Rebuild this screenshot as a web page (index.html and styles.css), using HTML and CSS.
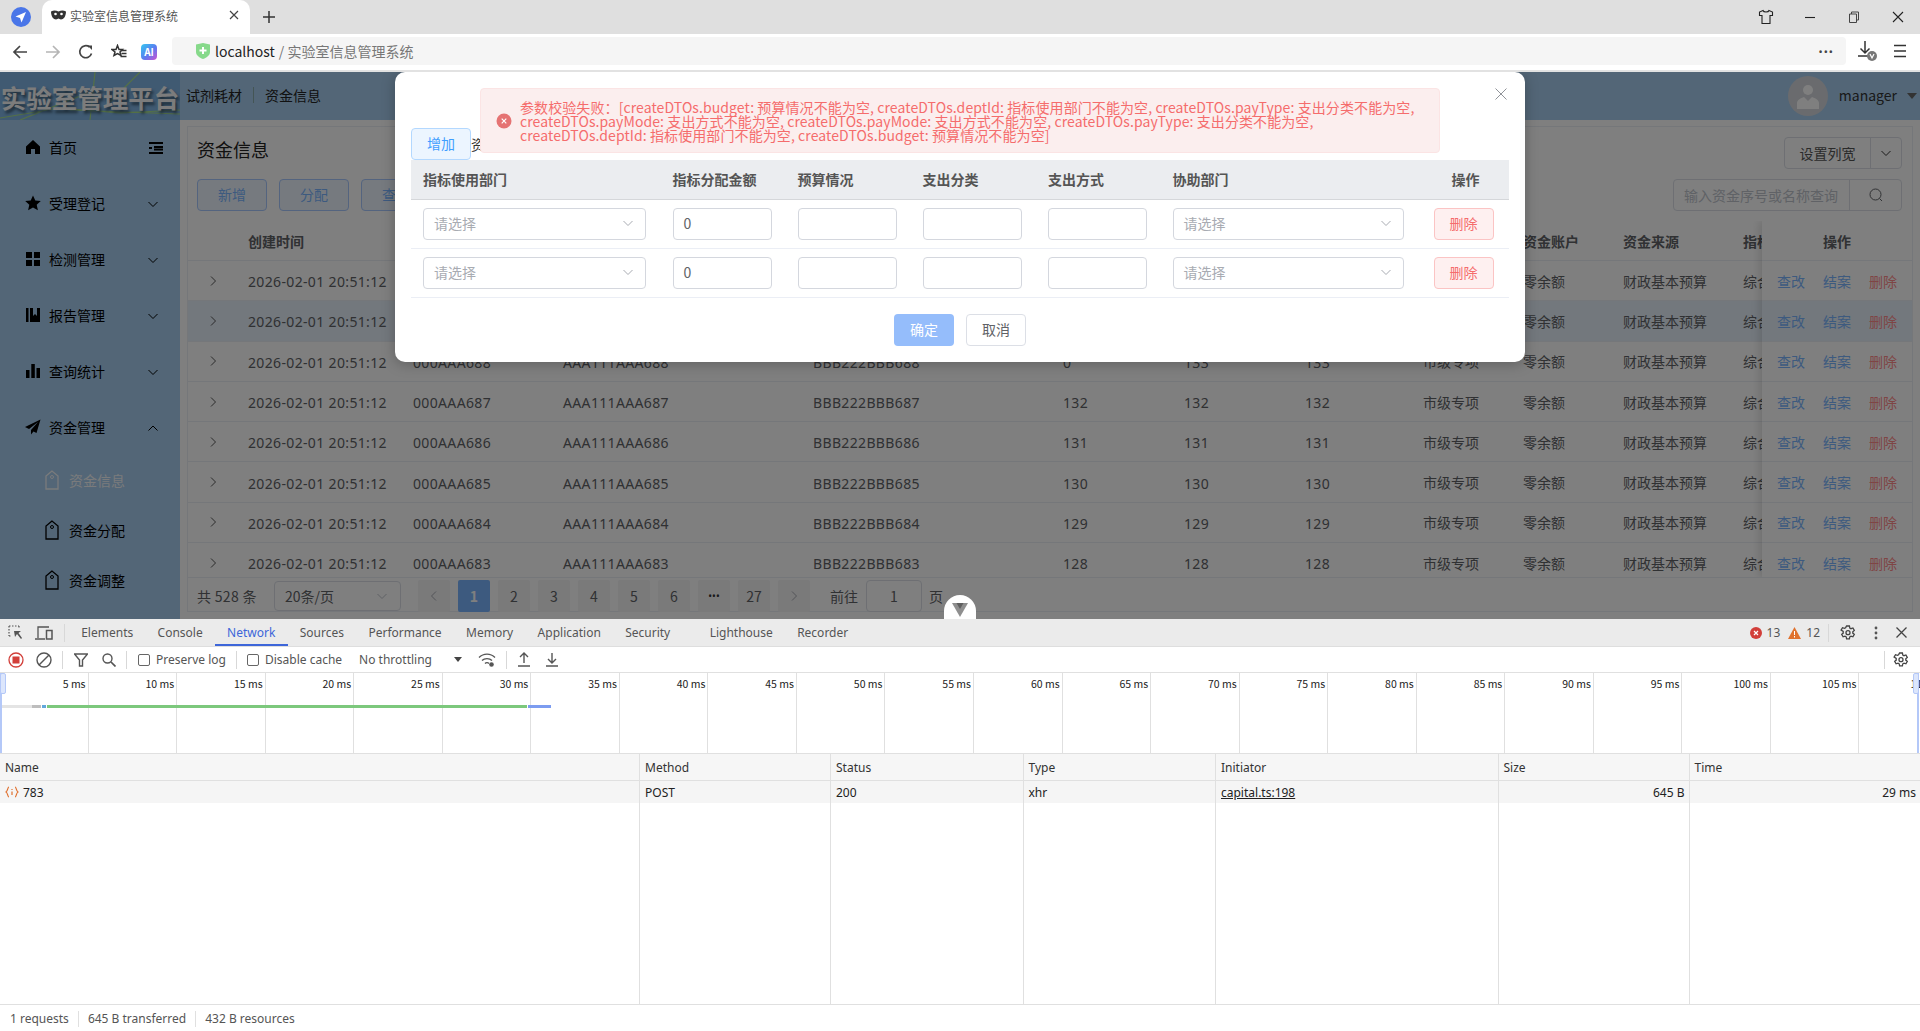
FILE: index.html
```html
<!DOCTYPE html>
<html lang="zh-CN">
<head>
  <meta charset="UTF-8">
  <title>实验室信息管理系统</title>
  <link rel="stylesheet" href="styles.css">
</head>
<body>
  <svg class="defs" width="0" height="0">
    <symbol id="down" viewBox="0 0 12 12"><path d="M1.5 4 6 8.5 10.5 4" fill="none" stroke="currentColor" stroke-width="1"/></symbol>
    <symbol id="up" viewBox="0 0 12 12"><path d="M1.5 8.5 6 4l4.5 4.5" fill="none" stroke="currentColor" stroke-width="1"/></symbol>
    <symbol id="right" viewBox="0 0 12 12"><path d="M4 1.5 8.5 6 4 10.5" fill="none" stroke="currentColor" stroke-width="1"/></symbol>
    <symbol id="left" viewBox="0 0 12 12"><path d="M8 1.5 3.5 6 8 10.5" fill="none" stroke="currentColor" stroke-width="1"/></symbol>
    <symbol id="tag" viewBox="0 0 14 20"><path d="M7 1 1 6v13h12V6z" fill="none" stroke="currentColor" stroke-width="1.3"/><circle cx="7" cy="7" r="1.5" fill="none" stroke="currentColor"/></symbol>
    <symbol id="gear" viewBox="0 0 16 16"><path d="M6.6 1h2.8l.4 2 1.2.7 1.9-.7 1.4 2.4-1.5 1.3v1.4l1.5 1.3-1.4 2.4-1.9-.7-1.2.7-.4 2H6.6l-.4-2-1.2-.7-1.9.7-1.4-2.4 1.5-1.3V6.400L1.100 5.100l1.400-2.400 1.900.7 1.200-.7z" fill="none" stroke="currentColor" stroke-width="1.300"/><circle cx="8" cy="7.700" r="2" fill="none" stroke="currentColor" stroke-width="1.300"/></symbol>
  </svg>

  <div class="tabstrip">
    <span class="pinned">
      <svg width="20" height="20" viewBox="0 0 20 20"><circle cx="10" cy="10" r="10" fill="#4a76e8"/><path d="M15 5 4.500 9.500l4.500 1.500 1.500 4.500z" fill="#fff"/></svg>
    </span>
    <div class="tab">
      <svg class="tab-icon" width="15" height="10" viewBox="0 0 15 10"><path d="M0 1.500C3 0 5 .5 7.500 1.500 10 .5 12 0 15 1.500c0 5-2.500 8-5 8-1.200 0-1.800-1-2.500-1s-1.300 1-2.500 1c-2.500 0-5-3-5-8z" fill="#333"/><circle cx="4.500" cy="4" r="1.300" fill="#fff"/><circle cx="10.500" cy="4" r="1.300" fill="#fff"/></svg>
      <span class="tab-title">实验室信息管理系统</span>
      <svg class="tab-close" width="10" height="10" viewBox="0 0 10 10"><path d="M1 1l8 8M9 1 1 9" stroke="#444" stroke-width="1.200"/></svg>
    </div>
    <svg class="newtab" width="14" height="14" viewBox="0 0 14 14"><path d="M7 1v12M1 7h12" stroke="#333" stroke-width="1.500"/></svg>
    <div class="win-btns">
      <svg class="win-skin" width="16" height="16" viewBox="0 0 16 16"><path d="M5 1.500 1.500 3v3.500H4v8h8v-8h2.500V3L11 1.500C10.500 3.500 5.500 3.500 5 1.500z" fill="none" stroke="#222" stroke-width="1.100"/></svg>
      <svg width="12" height="12" viewBox="0 0 12 12"><path d="M1 6.500h10" stroke="#222" stroke-width="1.100"/></svg>
      <svg width="12" height="12" viewBox="0 0 12 12"><path d="M3.500 3V1h7v8H8.500M1.500 3h7v8.500h-7z" fill="none" stroke="#444"/></svg>
      <svg width="12" height="12" viewBox="0 0 12 12"><path d="M1 1l10 10M11 1 1 11" stroke="#222" stroke-width="1.100"/></svg>
    </div>
  </div>

  <div class="toolbar">
    <div class="nav-btns">
      <svg width="16" height="16" viewBox="0 0 16 16"><path d="M15 8H2M8 2 2 8l6 6" fill="none" stroke="#444" stroke-width="1.700"/></svg>
      <svg width="16" height="16" viewBox="0 0 16 16"><path d="M1 8h13M8 2l6 6-6 6" fill="none" stroke="#b5b5b5" stroke-width="1.700"/></svg>
      <svg width="16" height="16" viewBox="0 0 16 16"><path d="M13.500 9.500A6 6 0 1 1 11.500 3" fill="none" stroke="#444" stroke-width="1.700"/><path d="M9.500 1.500h4.500V6z" fill="#444"/></svg>
      <svg width="16" height="16" viewBox="0 0 16 16"><path d="M6.500 1.500 8 5.500h-.5 4L9 8l1 3.500-3.500-2-3.500 2 1-3.500L1 5.500h4z" fill="none" stroke="#333" stroke-width="1.500"/><path d="M10.500 6.500H15.500M10.500 9.500H15.500M9.500 12.500H15.500" stroke="#333" stroke-width="1.500"/></svg>
      <span class="ai-badge">AI</span>
    </div>
    <div class="addressbar">
      <svg width="14" height="16" viewBox="0 0 14 16"><path d="M0 1.500 7 0l7 1.500V9c0 3-3 5.500-7 7-4-1.500-7-4-7-7z" fill="#86d98a"/><path d="M7 4v7M3.500 7.500h7" stroke="#fff" stroke-width="2"/></svg>
      <span class="host">localhost</span>
      <span class="path">/ 实验室信息管理系统</span>
      <span class="addr-more">•••</span>
    </div>
    <div class="tool-right">
      <svg width="22" height="22" viewBox="0 0 22 22"><path d="M8 1v12M3.500 8.500 8 13l4.500-4.500M1 16h12" fill="none" stroke="#333" stroke-width="1.500"/><circle cx="15" cy="16" r="5" fill="#777"/><path d="M13 14l2 4 2-4" fill="none" stroke="#fff" stroke-width="1.200"/></svg>
      <svg width="12" height="14" viewBox="0 0 12 14"><path d="M0 1.500h12M0 7h12M0 12.500h12" stroke="#333" stroke-width="1.700"/></svg>
    </div>
  </div>

  <div class="app">
    <header class="app-head">
      <div class="logo">
        <svg class="logo-grass" width="180" height="48" viewBox="0 0 180 48"><path d="M0 46 60 36 120 41 180 38M20 48 90 20M95 0 90 48M140 0 110 30M70 38 180 42" fill="none" stroke="#a8e08c" stroke-width="1.200"/></svg>
        <span class="logo-text">实验室管理平台</span>
      </div>
      <div class="crumbs"><span>试剂耗材</span><i></i><span>资金信息</span></div>
      <div class="user">
        <span class="avatar">
          <svg width="24" height="26" viewBox="0 0 24 26"><circle cx="12" cy="7" r="5" fill="#fff"/><path d="M1 26v-6c0-3 4-5 7-6l4 4 4-4c3 1 7 3 7 6v6z" fill="#fff"/></svg>
        </span>
        <span class="user-name">manager</span>
        <span class="caret"></span>
      </div>
    </header>

    <div class="app-body">
      <nav class="side">
        <div class="side-item">
          <svg class="side-icon" width="16" height="16" viewBox="0 0 16 16"><path d="M8 1 1 7.500V15h5v-5h4v5h5V7.500z"/></svg>
          <span>首页</span>
          <svg class="side-fold" width="14" height="14" viewBox="0 0 14 14"><path d="M0 2h14M5 6h9M0 7h3M5 8.500h9M0 12h14" stroke="#000" stroke-width="2"/></svg>
        </div>
        <div class="side-item">
          <svg class="side-icon" width="16" height="16" viewBox="0 0 16 16"><path d="M8 .5l2.300 5 5.500.6-4.100 3.700 1.200 5.400L8 12.400l-4.900 2.800 1.200-5.400L.2 6.100l5.500-.6z"/></svg>
          <span>受理登记</span><svg class="side-arrow"><use href="#down"/></svg>
        </div>
        <div class="side-item">
          <svg class="side-icon" width="16" height="16" viewBox="0 0 16 16"><path d="M1 1h6v6H1zM9 1h6v6H9zM1 9h6v6H1zM9 9h6v6H9z"/></svg>
          <span>检测管理</span><svg class="side-arrow"><use href="#down"/></svg>
        </div>
        <div class="side-item">
          <svg class="side-icon" width="16" height="16" viewBox="0 0 16 16"><path d="M1 1h2.500v14H1zM5 1h3v8l2-2 2 2V1h3v14H5z"/></svg>
          <span>报告管理</span><svg class="side-arrow"><use href="#down"/></svg>
        </div>
        <div class="side-item">
          <svg class="side-icon" width="16" height="16" viewBox="0 0 16 16"><path d="M1 7h3.500v8H1zM6.300 1h3.500v14H6.300zM11.500 5H15v10h-3.500z"/></svg>
          <span>查询统计</span><svg class="side-arrow"><use href="#down"/></svg>
        </div>
        <div class="side-item">
          <svg class="side-icon" width="16" height="16" viewBox="0 0 16 16"><path d="M15.500.5 0 8l4 2L13 3 6 11v4.500l2.500-3 3 1.500z"/></svg>
          <span>资金管理</span><svg class="side-arrow"><use href="#up"/></svg>
        </div>
        <div class="side-sub active"><svg class="sub-icon"><use href="#tag"/></svg><span>资金信息</span></div>
        <div class="side-sub"><svg class="sub-icon"><use href="#tag"/></svg><span>资金分配</span></div>
        <div class="side-sub"><svg class="sub-icon"><use href="#tag"/></svg><span>资金调整</span></div>
      </nav>

      <main class="main">
        <section class="panel">
          <div class="panel-title">
            <h1>资金信息</h1>
            <div class="btn-group">
              <span class="group-text">设置列宽</span>
              <span class="group-arrow"><svg width="12" height="12"><use href="#down"/></svg></span>
            </div>
          </div>
          <div class="panel-tools">
            <span class="btn-plain">新增</span>
            <span class="btn-plain">分配</span>
            <span class="btn-plain">查询</span>
            <div class="search">
              <span class="search-text">输入资金序号或名称查询</span>
              <span class="search-btn">
                <svg width="14" height="14" viewBox="0 0 14 14"><circle cx="6.500" cy="6.500" r="5.500" fill="none" stroke="#606266"/><path d="M10.500 10.500 13 13" stroke="#606266"/></svg>
              </span>
            </div>
          </div>

          <div class="table">
            <div class="table-main">
              <div class="tr th">
                <span></span><span>创建时间</span><span>资金序号</span><span>资金名称</span><span>资金编号</span><span>总金额</span><span>可用金额</span><span>已用</span><span>资金类型</span><span>资金账户</span><span>资金来源</span><span>指标来源</span>
              </div>
              <div class="tr">
                <svg class="expand"><use href="#right"/></svg><span>2026-02-01 20:51:12</span><span>000AAA690</span><span>AAA111AAA690</span><span>BBB222BBB690</span><span>135</span><span>135</span><span>135</span><span>市级专项</span><span>零余额</span><span>财政基本预算</span><span>综合预算</span>
              </div>
              <div class="tr hover">
                <svg class="expand"><use href="#right"/></svg><span>2026-02-01 20:51:12</span><span>000AAA689</span><span>AAA111AAA689</span><span>BBB222BBB689</span><span>134</span><span>134</span><span>134</span><span>市级专项</span><span>零余额</span><span>财政基本预算</span><span>综合预算</span>
              </div>
              <div class="tr">
                <svg class="expand"><use href="#right"/></svg><span>2026-02-01 20:51:12</span><span>000AAA688</span><span>AAA111AAA688</span><span>BBB222BBB688</span><span>0</span><span>133</span><span>133</span><span>市级专项</span><span>零余额</span><span>财政基本预算</span><span>综合预算</span>
              </div>
              <div class="tr">
                <svg class="expand"><use href="#right"/></svg><span>2026-02-01 20:51:12</span><span>000AAA687</span><span>AAA111AAA687</span><span>BBB222BBB687</span><span>132</span><span>132</span><span>132</span><span>市级专项</span><span>零余额</span><span>财政基本预算</span><span>综合预算</span>
              </div>
              <div class="tr">
                <svg class="expand"><use href="#right"/></svg><span>2026-02-01 20:51:12</span><span>000AAA686</span><span>AAA111AAA686</span><span>BBB222BBB686</span><span>131</span><span>131</span><span>131</span><span>市级专项</span><span>零余额</span><span>财政基本预算</span><span>综合预算</span>
              </div>
              <div class="tr">
                <svg class="expand"><use href="#right"/></svg><span>2026-02-01 20:51:12</span><span>000AAA685</span><span>AAA111AAA685</span><span>BBB222BBB685</span><span>130</span><span>130</span><span>130</span><span>市级专项</span><span>零余额</span><span>财政基本预算</span><span>综合预算</span>
              </div>
              <div class="tr">
                <svg class="expand"><use href="#right"/></svg><span>2026-02-01 20:51:12</span><span>000AAA684</span><span>AAA111AAA684</span><span>BBB222BBB684</span><span>129</span><span>129</span><span>129</span><span>市级专项</span><span>零余额</span><span>财政基本预算</span><span>综合预算</span>
              </div>
              <div class="tr">
                <svg class="expand"><use href="#right"/></svg><span>2026-02-01 20:51:12</span><span>000AAA683</span><span>AAA111AAA683</span><span>BBB222BBB683</span><span>128</span><span>128</span><span>128</span><span>市级专项</span><span>零余额</span><span>财政基本预算</span><span>综合预算</span>
              </div>
            </div>
            <div class="table-fixed">
              <div class="fx th"><span>操作</span></div>
              <div class="fx"><a class="blue">查改</a><a class="blue">结案</a><a class="red">删除</a></div>
              <div class="fx hover"><a class="blue">查改</a><a class="blue">结案</a><a class="red">删除</a></div>
              <div class="fx"><a class="blue">查改</a><a class="blue">结案</a><a class="red">删除</a></div>
              <div class="fx"><a class="blue">查改</a><a class="blue">结案</a><a class="red">删除</a></div>
              <div class="fx"><a class="blue">查改</a><a class="blue">结案</a><a class="red">删除</a></div>
              <div class="fx"><a class="blue">查改</a><a class="blue">结案</a><a class="red">删除</a></div>
              <div class="fx"><a class="blue">查改</a><a class="blue">结案</a><a class="red">删除</a></div>
              <div class="fx"><a class="blue">查改</a><a class="blue">结案</a><a class="red">删除</a></div>
            </div>
          </div>

          <div class="pager">
            <span class="pager-total">共 528 条</span>
            <span class="pager-size">20条/页<svg width="12" height="12"><use href="#down"/></svg></span>
            <div class="pager-nums">
              <span class="pg muted"><svg width="12" height="12"><use href="#left"/></svg></span>
              <span class="pg on">1</span><span class="pg">2</span><span class="pg">3</span><span class="pg">4</span><span class="pg">5</span><span class="pg">6</span><span class="pg dots">•••</span><span class="pg">27</span>
              <span class="pg muted"><svg width="12" height="12"><use href="#right"/></svg></span>
            </div>
            <span class="pager-go">前往</span>
            <span class="pager-input">1</span>
            <span class="pager-unit">页</span>
          </div>
        </section>
      </main>
    </div>

    <div class="mask"></div>

    <div class="dialog">
      <div class="dialog-add"><span class="btn-add">增加</span><span class="add-note">资金序号</span></div>
      <div class="alert">
        <svg width="16" height="16" viewBox="0 0 16 16"><circle cx="8" cy="8" r="7.500" fill="#e57373"/><path d="M5.700 5.700l4.600 4.600M10.300 5.700l-4.600 4.600" stroke="#fff" stroke-width="1.200"/></svg>
        <p>参数校验失败：[createDTOs.budget: 预算情况不能为空, createDTOs.deptId: 指标使用部门不能为空, createDTOs.payType: 支出分类不能为空,<br>createDTOs.payMode: 支出方式不能为空, createDTOs.payMode: 支出方式不能为空, createDTOs.payType: 支出分类不能为空,<br>createDTOs.deptId: 指标使用部门不能为空, createDTOs.budget: 预算情况不能为空]</p>
      </div>
      <svg class="dialog-close" width="12" height="12" viewBox="0 0 12 12"><path d="M.5.500l11 11M11.500.500l-11 11" stroke="#909399"/></svg>
      <div class="dt dt-head">
        <span>指标使用部门</span><span>指标分配金额</span><span>预算情况</span><span>支出分类</span><span>支出方式</span><span>协助部门</span><span class="dt-op">操作</span>
      </div>
      <div class="dt dt-row">
        <span class="sel sel-a">请选择<svg width="12" height="12"><use href="#down"/></svg></span>
        <span class="inp">0</span><span class="inp"></span><span class="inp"></span><span class="inp"></span>
        <span class="sel sel-b">请选择<svg width="12" height="12"><use href="#down"/></svg></span>
        <span class="btn-del">删除</span>
      </div>
      <div class="dt dt-row">
        <span class="sel sel-a">请选择<svg width="12" height="12"><use href="#down"/></svg></span>
        <span class="inp">0</span><span class="inp"></span><span class="inp"></span><span class="inp"></span>
        <span class="sel sel-b">请选择<svg width="12" height="12"><use href="#down"/></svg></span>
        <span class="btn-del">删除</span>
      </div>
      <div class="dialog-foot"><span class="btn-ok">确定</span><span class="btn-cancel">取消</span></div>
    </div>

    <div class="vue-tab">
      <svg width="16" height="14" viewBox="0 0 16 14"><path d="M0 0h16L8 14z" fill="#8f8f8f"/><path d="M4.500 0h7L8 6z" fill="#5f5f5f"/></svg>
    </div>
  </div>

  <div class="devtools">
    <div class="dt-tabs">
      <svg class="dt-ico" width="16" height="16" viewBox="0 0 16 16"><path d="M1 1h10M1 1v10M1 11h3M11 1v3" fill="none" stroke="#555" stroke-width="1.200" stroke-dasharray="1.500 1.500"/><path d="M6 6h7l-2.500 2 3.500 5-1 1-4-5L7 12z" fill="#555"/></svg>
      <svg class="dt-ico" width="18" height="16" viewBox="0 0 18 16"><path d="M3 13V2h11M0 14h10" fill="none" stroke="#555" stroke-width="1.300"/><rect x="11.500" y="5.500" width="5.500" height="8.500" fill="none" stroke="#555" stroke-width="1.500"/></svg>
      <i class="dt-sep"></i>
      <span class="dt-tab">Elements</span>
      <span class="dt-tab">Console</span>
      <span class="dt-tab on">Network</span>
      <span class="dt-tab">Sources</span>
      <span class="dt-tab">Performance</span>
      <span class="dt-tab">Memory</span>
      <span class="dt-tab">Application</span>
      <span class="dt-tab">Security</span>
      <span class="dt-tab wide">Lighthouse</span>
      <span class="dt-tab">Recorder</span>
      <div class="dt-right">
        <svg width="12" height="12" viewBox="0 0 12 12"><circle cx="6" cy="6" r="6" fill="#d23f3a"/><path d="M4 4l4 4M8 4 4 8" stroke="#fff" stroke-width="1.200"/></svg>
        <span class="count">13</span>
        <svg class="warn" width="13" height="12" viewBox="0 0 13 12"><path d="M6.500 0 13 12H0z" fill="#e0722e"/><path d="M6.500 4v4M6.500 9v1.500" stroke="#fff"/></svg>
        <span class="count">12</span>
        <i class="dt-sep"></i>
        <svg class="dt-gear" width="16" height="16"><use href="#gear"/></svg>
        <svg class="dt-dots" width="4" height="14" viewBox="0 0 4 14"><circle cx="2" cy="2" r="1.400" fill="#555"/><circle cx="2" cy="7" r="1.400" fill="#555"/><circle cx="2" cy="12" r="1.400" fill="#555"/></svg>
        <svg class="dt-x" width="11" height="11" viewBox="0 0 11 11"><path d="M.5.500l10 10M10.500.500l-10 10" stroke="#444" stroke-width="1.300"/></svg>
      </div>
    </div>
    <div class="dt-tools">
      <svg width="16" height="16" viewBox="0 0 16 16"><circle cx="8" cy="8" r="7" fill="none" stroke="#d23f3a" stroke-width="1.300"/><rect x="4.500" y="4.500" width="7" height="7" fill="#d23f3a"/></svg>
      <svg class="t-clear" width="16" height="16" viewBox="0 0 16 16"><circle cx="8" cy="8" r="7" fill="none" stroke="#555" stroke-width="1.400"/><path d="M3 13 13 3" stroke="#555" stroke-width="1.400"/></svg>
      <i class="dt-sep"></i>
      <svg class="t-filter" width="14" height="14" viewBox="0 0 14 14"><path d="M.5 1h13L8.500 7v6h-3V7z" fill="none" stroke="#555" stroke-width="1.400"/></svg>
      <svg class="t-search" width="14" height="14" viewBox="0 0 14 14"><circle cx="5.500" cy="5.500" r="4.500" fill="none" stroke="#555" stroke-width="1.400"/><path d="M9 9l4.500 4.500" stroke="#555" stroke-width="1.700"/></svg>
      <i class="dt-sep"></i>
      <label class="chk"><i></i>Preserve log</label>
      <i class="dt-sep"></i>
      <label class="chk"><i></i>Disable cache</label>
      <span class="throttle">No throttling</span>
      <span class="tri"></span>
      <svg class="t-wifi" width="18" height="16" viewBox="0 0 18 16"><path d="M1 5.500C5.500 1 12.500 1 17 5.500M4 8.500C6.500 6 11.500 6 14 8.500M7 11.500c1-1 3-1 4 0" fill="none" stroke="#555" stroke-width="1.300"/><circle cx="13.500" cy="12.500" r="2.300" fill="#555"/></svg>
      <i class="dt-sep"></i>
      <svg class="t-up" width="14" height="15" viewBox="0 0 14 15"><path d="M7 11V1M3 5l4-4 4 4M1 14h12" fill="none" stroke="#555" stroke-width="1.400"/></svg>
      <svg class="t-down" width="14" height="15" viewBox="0 0 14 15"><path d="M7 1v10M3 7l4 4 4-4M1 14h12" fill="none" stroke="#555" stroke-width="1.400"/></svg>
      <div class="t-right"><i class="dt-sep"></i><svg class="dt-gear" width="16" height="16"><use href="#gear"/></svg></div>
    </div>
    <div class="overview">
      <div class="ticks">
        <span>5 ms</span><span>10 ms</span><span>15 ms</span><span>20 ms</span><span>25 ms</span><span>30 ms</span><span>35 ms</span><span>40 ms</span><span>45 ms</span><span>50 ms</span><span>55 ms</span><span>60 ms</span><span>65 ms</span><span>70 ms</span><span>75 ms</span><span>80 ms</span><span>85 ms</span><span>90 ms</span><span>95 ms</span><span>100 ms</span><span>105 ms</span><span>110 ms</span>
      </div>
      <div class="wf">
        <i class="wf-a"></i><i class="wf-b"></i><i class="wf-c"></i><i class="wf-d"></i><i class="wf-e"></i>
      </div>
      <span class="handle handle-l"></span>
      <span class="handle handle-r"></span>
    </div>
    <div class="net">
      <div class="nh">Name</div><div class="nh">Method</div><div class="nh">Status</div><div class="nh">Type</div><div class="nh">Initiator</div><div class="nh">Size</div><div class="nh">Time</div>
      <div class="nr"><svg class="xhr-ico" width="14" height="12" viewBox="0 0 14 12"><path d="M4 1C2.500 1 3 5 1 6c2 1 1.500 5 3 5M10 1c1.500 0 1 4 3 5-2 1-1.500 5-3 5" fill="none" stroke="#e0702e" stroke-width="1.100"/><path d="M7 3v1M7 5.500V9" stroke="#e0702e" stroke-width="1.200"/></svg>783</div>
      <div class="nr">POST</div><div class="nr">200</div><div class="nr">xhr</div><div class="nr"><u>capital.ts:198</u></div><div class="nr num">645 B</div><div class="nr num">29 ms</div>
      <div class="nf"></div><div class="nf"></div><div class="nf"></div><div class="nf"></div><div class="nf"></div><div class="nf"></div><div class="nf"></div>
    </div>
    <div class="dt-status">
      <span>1 requests</span><span>645 B transferred</span><span>432 B resources</span>
    </div>
  </div>
</body>
</html>
```

FILE: styles.css
```css
* { margin: 0; padding: 0; box-sizing: border-box; }
html, body { width: 1920px; height: 1031px; overflow: hidden; background: #fff; }
body { font-family: "Noto Sans CJK SC", "Noto Sans", sans-serif; font-size: 14px; color: #333; }
i { font-style: normal; display: block; }
.defs { position: absolute; }

/* browser chrome */
.tabstrip { height: 34px; background: #dfdfdf; display: flex; align-items: center; }
.pinned { width: 42px; display: flex; justify-content: center; }
.tab { width: 208px; height: 34px; background: #fff; border-radius: 10px 10px 0 0; display: flex; align-items: center; padding: 0 0 4px 9px; position: relative; }
.tab-icon { margin-right: 4px; }
.tab-title { font-size: 12px; color: #555; flex: 1; }
.tab-close { margin-right: 11px; }
.newtab { margin-left: 12px; }
.win-btns { margin-left: auto; display: flex; align-items: center; gap: 30px; padding-right: 16px; }
.win-btns svg:nth-child(n+2) { margin-left: 2px; }
.win-skin { margin-right: -2px; }

.toolbar { height: 38px; background: #fff; border-bottom: 2px solid #e2e2e2; display: flex; align-items: center; }
.nav-btns { width: 172px; display: flex; align-items: center; gap: 17px; padding-left: 12px; }
.ai-badge { width: 16px; height: 16px; margin-left: -3px; border-radius: 4px; background: linear-gradient(135deg, #35c8f0, #5a7bf0 55%, #d050d0); color: #fff; font-size: 10px; font-weight: 700; line-height: 16px; text-align: center; }
.addressbar { width: 1674px; height: 28px; margin-top: -2px; background: #f5f5f5; border-radius: 4px; display: flex; align-items: center; padding-left: 24px; }
.host { font-size: 14px; color: #222; margin-left: 5px; }
.path { font-size: 14px; color: #777; margin-left: 4px; }
.addr-more { margin-left: auto; margin-right: 12px; font-family: "Noto Sans", sans-serif; font-size: 11px; letter-spacing: 1px; color: #444; }
.tool-right { flex: 1; display: flex; align-items: center; gap: 15px; padding-left: 11px; margin-top: -2px; }

/* app */
.app { height: 547px; position: relative; overflow: hidden; background: #fff; }
.app-head { height: 48px; background: #a6ccee; display: flex; align-items: center; }
.logo { width: 180px; height: 48px; background: #80b4e4; position: relative; overflow: hidden; display: flex; align-items: center; justify-content: center; }
.logo-grass { position: absolute; left: 0; top: 0; }
.logo-text { position: relative; font-size: 25.5px; font-weight: 700; color: #f8f8f8; text-shadow: 2px 3px 3px #3c5a70; white-space: nowrap; }
.crumbs { display: flex; align-items: center; padding: 0 0 3px 6px; color: #222; }
.crumbs i { width: 1px; height: 16px; background: #8aa; margin: 0 11px; }
.user { margin-left: auto; display: flex; align-items: center; }
.avatar { width: 40px; height: 40px; border-radius: 50%; background: #d4d7dc; display: flex; align-items: flex-end; justify-content: center; padding-bottom: 7px; }
.user-name { font-size: 14px; color: #333; margin: 0 0 2px 11px; }
.caret { width: 0; height: 0; border: 5px solid transparent; border-top: 6px solid #666; border-bottom: 0; margin: 0 3px 0 10px; }

.app-body { height: 499px; display: flex; }
.side { width: 180px; background: #a6ccee; color: #000; }
.side-item { height: 56px; display: flex; align-items: center; padding: 0 0 2px 25px; position: relative; }
.side-icon { margin-right: 8px; fill: #000; }
.side-fold { position: absolute; left: 149px; top: 21px; }
.side-arrow { position: absolute; left: 147px; top: 22px; width: 12px; height: 12px; }
.side-sub { height: 50px; display: flex; align-items: center; padding: 0 0 2px 45px; }
.sub-icon { width: 14px; height: 20px; margin-right: 10px; }
.side-sub.active { color: #f4f6f8; }

.main { flex: 1; background: #fff; padding: 6px 7px 7px 7px; min-width: 0; }
.panel { height: 486px; border: 1px solid #ebeef5; background: #fff; display: flex; flex-direction: column; }
.panel-title { display: flex; align-items: center; justify-content: space-between; padding: 10px 10px 11px 9px; height: 52px; }
.panel-title h1 { font-size: 18px; font-weight: 400; color: #222; padding-bottom: 8px; }
.btn-group { width: 118px; height: 32px; border: 1px solid #dcdfe6; border-radius: 4px; display: flex; align-items: center; }
.group-text { width: 86px; text-align: center; color: #555; border-right: 1px solid #dcdfe6; line-height: 30px; }
.group-arrow { flex: 1; display: flex; justify-content: center; color: #333; }
.panel-tools { display: flex; gap: 12px; padding: 0 10px 0 9px; height: 32px; align-items: stretch; position: relative; }
.btn-plain { width: 70px; padding-bottom: 2px; border: 1px solid #a8c8ff; border-radius: 4px; background: #ecf5ff; color: #7ab5ff; display: flex; align-items: center; justify-content: center; }
.search { margin-left: auto; width: 229px; border: 1px solid #dcdfe6; border-radius: 4px; display: flex; }
.search-text { width: 176px; color: #c0c4cc; padding-left: 10px; line-height: 30px; border-right: 1px solid #dcdfe6; white-space: nowrap; }
.search-btn { flex: 1; display: flex; align-items: center; justify-content: center; }

.table { height: 357px; margin-top: 10px; display: flex; overflow: hidden; }
.table-main { width: 1574px; flex: none; overflow: hidden; }
.tr { display: grid; grid-template-columns: 60px 165px 150px 250px 250px 121px 121px 118px 100px 100px 120px 19px; height: 40.3px; align-items: center; border-bottom: 1px solid #ebeef5; color: #606266; white-space: nowrap; overflow: hidden; }
.tr span:nth-child(n+2):nth-child(-n+8) { padding-top: 2px; font-family: "Noto Sans", "Noto Sans CJK SC", sans-serif; letter-spacing: .35px; }
.tr.th { height: 40px; font-weight: 700; color: #606266; }
.tr.th span:nth-child(n+2) { padding-top: 0; font-family: "Noto Sans CJK SC", sans-serif; letter-spacing: 0; }
.tr.hover, .fx.hover { background: #e6f0fa; }
.expand { width: 12px; height: 12px; margin-left: 19px; color: #555; }
.table-fixed { flex: 1; position: relative; box-shadow: -3px 0 8px rgba(0, 0, 0, .12); background: #fff; }
.fx { height: 40.3px; display: flex; align-items: center; justify-content: center; gap: 18px; border-bottom: 1px solid #ebeef5; }
.fx.th { height: 40px; font-weight: 700; color: #606266; }
.blue { color: #7ab5ff; }
.red { color: #ff8a8a; }

.pager { height: 34px; padding: 2px 0 0 9px; border-top: 1px solid #ebeef5; display: flex; align-items: center; color: #606266; }
.pager-total { width: 77px; letter-spacing: .3px; }
.pager-size { width: 127px; height: 30px; border: 1px solid #dcdfe6; border-radius: 4px; padding: 0 12px 0 10px; display: flex; align-items: center; justify-content: space-between; }
.pager-size svg { color: #c0c4cc; }
.pager-nums { display: flex; gap: 8px; margin-left: 17px; }
.pg { width: 32px; height: 32px; background: #f4f4f5; border-radius: 2px; display: flex; align-items: center; justify-content: center; font-size: 14px; }
.pg.on { background: #7ab5ff; color: #fff; font-weight: 700; }
.pg.muted { color: #a8abb2; }
.pg.dots { font-family: "Noto Sans", sans-serif; font-size: 10px; letter-spacing: 0; color: #333; }
.pager-go { margin-left: 20px; }
.pager-input { width: 56px; height: 32px; margin-left: 8px; border: 1px solid #dcdfe6; border-radius: 4px; text-align: center; line-height: 30px; }
.pager-unit { margin-left: 7px; }

.mask { position: absolute; inset: 0; background: rgba(0, 0, 0, .5); }

/* dialog */
.dialog { position: absolute; left: 395px; top: 0; width: 1130px; height: 290px; padding: 56px 16px 16px; background: #fff; border-radius: 10px; box-shadow: 0 2px 14px rgba(0, 0, 0, .25); }
.dialog-add { height: 32px; display: flex; align-items: center; overflow: hidden; }
.btn-add { width: 60px; height: 32px; flex: none; padding-bottom: 2px; background: #ecf5ff; border: 1px solid #b3d8ff; border-radius: 4px; color: #409eff; display: flex; align-items: center; justify-content: center; }
.add-note { color: #333; white-space: nowrap; }
.alert { position: absolute; left: 85px; top: 16px; width: 960px; height: 65px; background: #fbeeee; border: 1px solid #fbe4e4; border-radius: 4px; display: flex; align-items: center; padding-left: 15px; gap: 8px; color: #f56c6c; }
.alert svg { flex: none; }
.alert p { line-height: 14px; font-size: 14px; white-space: nowrap; letter-spacing: .09px; }
.dialog-close { position: absolute; left: 1100px; top: 16px; }
.dt { display: grid; grid-template-columns: 249.5px 125px 125px 125.5px 124.5px 261px 88px; align-items: center; border-bottom: 1px solid #ebeef5; }
.dt > * { margin-left: 12px; }
.dt-head { height: 40px; padding-bottom: 2px; background: #ebedf0; border-bottom: 1px solid #d5d7da; font-weight: 700; color: #555; }
.dt-head .dt-op { margin-left: 0; text-align: center; }
.dt-row { height: 49px; }
.sel, .inp { height: 32px; padding: 0 10px 2px; border: 1px solid #d4d7de; border-radius: 4px; display: flex; align-items: center; }
.sel { color: #a8abb2; justify-content: space-between; padding-right: 11px; }
.sel-a { width: 223px; }
.sel-b { width: 231.5px; }
.inp { width: 99px; color: #606266; }
.btn-del { width: 60px; height: 32px; padding-bottom: 2px; background: #fef0f0; border: 1px solid #fbc4c4; border-radius: 4px; color: #f56c6c; display: flex; align-items: center; justify-content: center; }
.dialog-foot { display: flex; justify-content: center; gap: 12px; padding-top: 16px; }
.btn-ok, .btn-cancel { width: 60px; height: 32px; padding-bottom: 2px; border-radius: 4px; display: flex; align-items: center; justify-content: center; }
.btn-ok { background: #95bdfb; color: #fff; }
.btn-cancel { border: 1px solid #dcdfe6; color: #606266; }

.vue-tab { position: absolute; left: 944px; bottom: 0; width: 32px; height: 24px; background: #fff; border-radius: 16px 16px 0 0; display: flex; justify-content: center; padding-top: 8px; }

/* devtools */
.devtools { height: 412px; font-family: "Noto Sans", "Noto Sans CJK SC", sans-serif; font-size: 12px; color: #333; }
.dt-tabs { height: 28px; background: #ebebeb; border-bottom: 1px solid #dedede; display: flex; align-items: center; padding-left: 8px; position: relative; }
.dt-ico { margin-right: 11px; flex: none; }
.dt-sep { width: 1px; height: 18px; background: #d8d8d8; flex: none; }
.dt-tab { padding: 0 12.2px; line-height: 27px; color: #555; }
.dt-tab:first-of-type { margin-left: 4px; }
.dt-tab.on { color: #3d66d9; box-shadow: inset 0 -2px 0 #3d66d9; }
.dt-tab.wide { margin-left: 15px; }
.dt-right { margin-left: auto; display: flex; align-items: center; padding-right: 13px; color: #555; }
.count { margin-left: 5px; }
.warn { margin-left: 8px; }
.dt-right .dt-sep { margin: 0 11px 0 8px; }
.dt-dots { margin-left: 18px; }
.dt-x { margin-left: 18px; }
.dt-gear { color: #444; }

.dt-tools { height: 26px; border-bottom: 1px solid #e0e0e0; display: flex; align-items: center; padding-left: 8px; }
.t-clear { margin-left: 12px; }
.dt-tools > .dt-sep { margin: 0 10px; height: 18px; }
.t-filter { margin-left: 1px; }
.t-search { margin-left: 14px; }
.t-search + .dt-sep { margin-right: 11px; }
.chk { display: flex; align-items: center; color: #555; }
.chk i { width: 12px; height: 12px; border: 1px solid #666; border-radius: 2px; margin-right: 6px; }
.throttle { margin-left: 17px; color: #555; }
.tri { width: 0; height: 0; border: 4px solid transparent; border-top: 5px solid #444; border-bottom: 0; margin-left: 22px; }
.t-wifi { margin-left: 16px; }
.t-up { margin-left: 0; }
.t-down { margin-left: 14px; }
.t-right { margin-left: auto; display: flex; align-items: center; gap: 8px; padding-right: 11px; }

.overview { height: 81px; border-bottom: 1px solid #e0e0e0; position: relative; overflow: hidden; }
.ticks { display: flex; height: 100%; }
.ticks span { flex: none; width: 88.55px; border-right: 1px solid #e0e0e0; text-align: right; padding: 3px 2px 0 0; font-family: "Noto Sans CJK SC", sans-serif; font-size: 10.5px; line-height: 16px; color: #222; white-space: nowrap; }
.wf { position: absolute; left: 0; top: 32px; width: 100%; height: 3px; }
.wf i { position: absolute; top: 0; height: 3px; }
.wf-a { left: 2px; width: 30px; background: #e4e4e4; }
.wf-b { left: 32px; width: 9px; background: #bdbdbd; }
.wf-c { left: 42px; width: 4px; background: #62a8dc; }
.wf-d { left: 47px; width: 480px; background: #7cc87c; }
.wf-e { left: 528px; width: 23px; background: #7c9cf0; }
.handle { position: absolute; top: 0; width: 2px; height: 100%; background: #b4c8f8; }
.handle::before { content: ""; position: absolute; top: 0; width: 4px; height: 19px; background: #dce6fc; border: 1px solid #b4c8f8; border-radius: 2px; }
.handle-l { left: 0; }
.handle-r { right: 1px; }
.handle-r::before { right: 0; }

.net { height: 250px; display: grid; grid-template-columns: 640px 191px 192.5px 192.5px 282.5px 191px 1fr; grid-template-rows: 27px 22px 1fr; }
.nh, .nr { display: flex; align-items: center; padding: 0 5px; border-right: 1px solid #e0e0e0; white-space: nowrap; }
.nh { background: #f6f6f6; border-bottom: 1px solid #e0e0e0; }
.nr { background: #f5f5f5; color: #222; }
.nr:nth-child(14) { border-right: 0; }
.nh:nth-child(7) { border-right: 0; }
.num { justify-content: flex-end; padding-right: 4px; }
.xhr-ico { margin-right: 4px; }
.nf { border-right: 1px solid #e0e0e0; }
.nf:last-child { border-right: 0; }

.dt-status { height: 27px; padding: 1px 0 0 10px; border-top: 1px solid #e0e0e0; display: flex; align-items: center; color: #555; }
.dt-status span { padding-right: 9px; margin-right: 9px; border-right: 1px solid #e0e0e0; line-height: 16px; }
.dt-status span:last-child { border-right: 0; }
```
